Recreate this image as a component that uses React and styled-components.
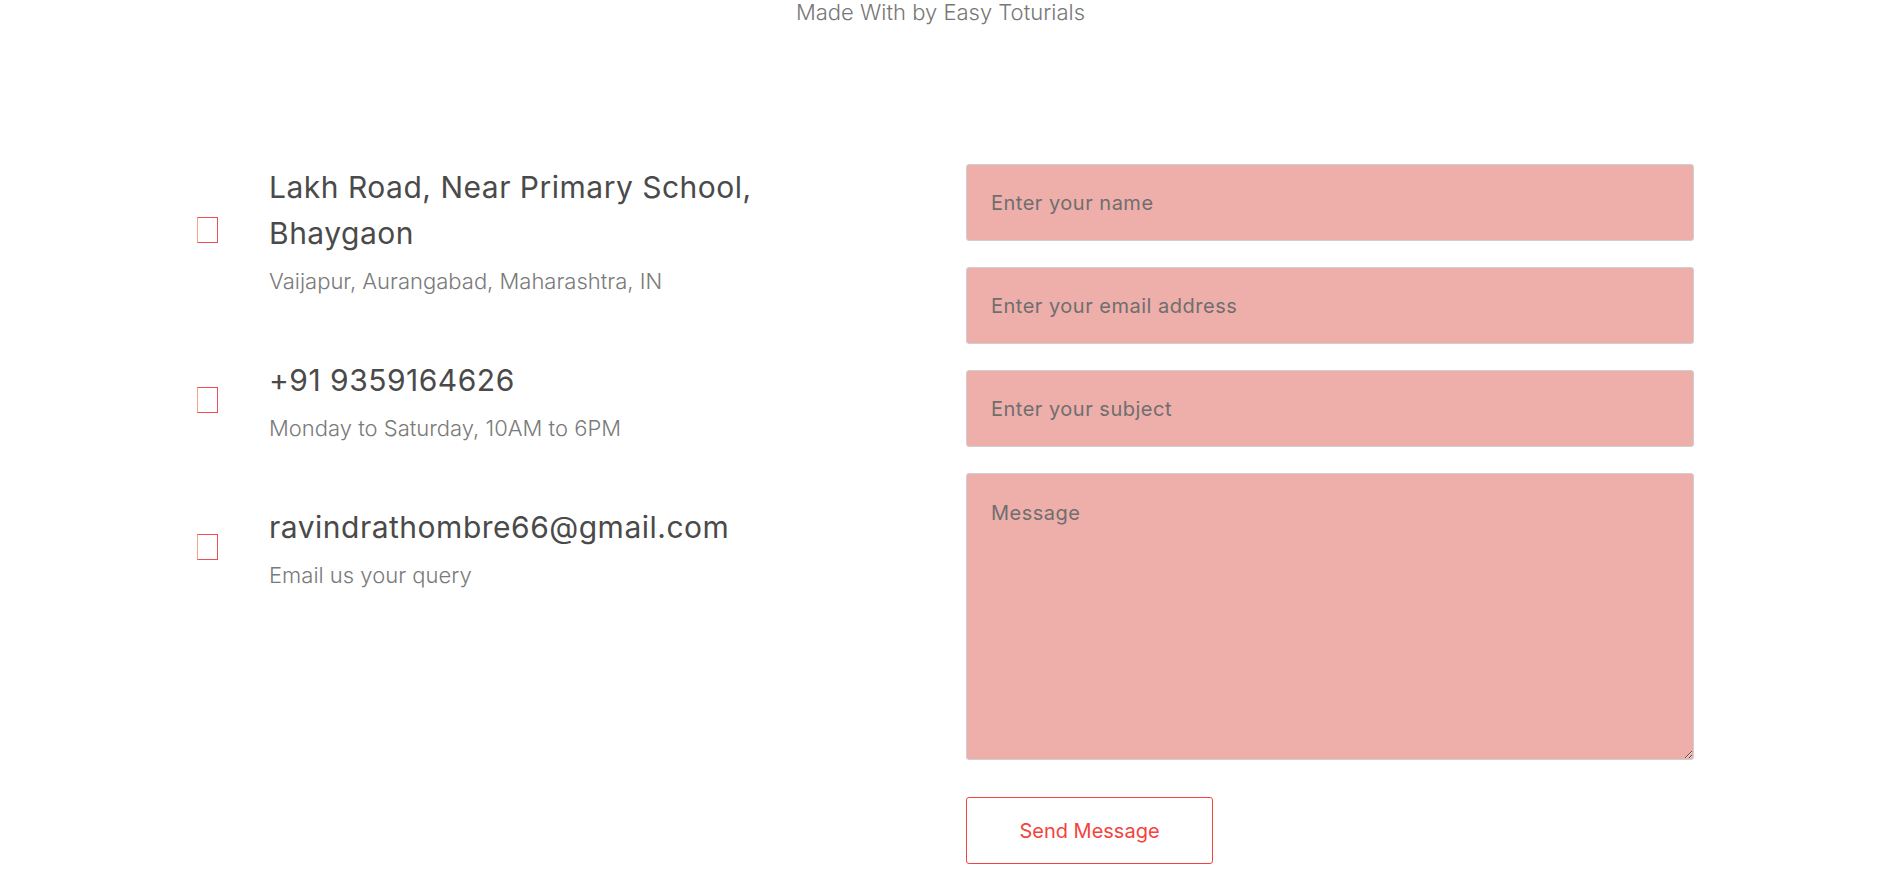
import React from 'react'
import styled, { createGlobalStyle } from 'styled-components'

const GlobalStyle = createGlobalStyle`
  * { box-sizing: border-box; }
  body {
    margin: 0;
    background: #ffffff;
    font-family: Inter, "Noto Sans", sans-serif;
  }
`

const Credit = styled.p`
  margin: 0;
  text-align: center;
  font-size: 22px;
  line-height: 24px;
  font-weight: 300;
  color: #777777;
`

const Section = styled.section`
  display: flex;
  justify-content: space-between;
  padding: 140px 187px 26px 197px;
`

const InfoList = styled.div`
  display: flex;
  flex-direction: column;
  gap: 61px;
  width: 600px;
`

const InfoRow = styled.div`
  display: flex;
  align-items: center;
  gap: 51px;
`

const Glyph = styled.span`
  flex: 0 0 auto;
  width: 21px;
  height: 26px;
  border: 1px solid #ee4f55;
  border-left-color: #f6a38a;
`

const InfoText = styled.div`
  display: flex;
  flex-direction: column;
  gap: 10px;
`

const Title = styled.h3`
  margin: 0;
  font-size: 30px;
  line-height: 46px;
  font-weight: 400;
  letter-spacing: 0.5px;
  color: #4a4a4a;
`

const Sub = styled.p`
  margin: 0;
  font-size: 22px;
  line-height: 30px;
  font-weight: 300;
  color: #7a7a7a;
`

const Form = styled.form`
  display: flex;
  flex-direction: column;
  gap: 26px;
  width: 728px;
`

const Field = styled.input`
  height: 77px;
  width: 100%;
  padding: 0 24px;
  background: #eeaeaa;
  border: 1px solid #cfcfcf;
  border-radius: 3px;
  font-family: inherit;
  font-size: 20px;
  letter-spacing: 0.5px;
  color: #555;
  outline: none;

  &::placeholder { color: #6e6e6e; }
`

const Area = styled.textarea`
  height: 287px;
  width: 100%;
  padding: 25px 24px;
  background: #eeaeaa;
  border: 1px solid #cfcfcf;
  border-radius: 3px;
  font-family: inherit;
  font-size: 20px;
  letter-spacing: 0.5px;
  line-height: 28px;
  color: #555;
  outline: none;
  resize: vertical;

  &::placeholder { color: #6e6e6e; }
`

const SendButton = styled.button`
  align-self: flex-start;
  margin-top: 11px;
  width: 247px;
  height: 67px;
  background: #ffffff;
  border: 1px solid #f4433c;
  border-radius: 3px;
  font-family: inherit;
  font-size: 20px;
  color: #f4433c;
  cursor: pointer;
`

const info = [
  { title: 'Lakh Road, Near Primary School, Bhaygaon', sub: 'Vaijapur, Aurangabad, Maharashtra, IN' },
  { title: '+91 9359164626', sub: 'Monday to Saturday, 10AM to 6PM' },
  { title: 'ravindrathombre66@gmail.com', sub: 'Email us your query' },
]

const App = () => {
  return (
    <>
      <GlobalStyle />
      <Credit>Made With by Easy Toturials</Credit>
      <Section>
        <InfoList>
          {info.map((item, i) => (
            <InfoRow key={i}>
              <Glyph />
              <InfoText>
                <Title>{item.title}</Title>
                <Sub>{item.sub}</Sub>
              </InfoText>
            </InfoRow>
          ))}
        </InfoList>
        <Form onSubmit={(e) => e.preventDefault()}>
          <Field type="text" placeholder="Enter your name" />
          <Field type="email" placeholder="Enter your email address" />
          <Field type="text" placeholder="Enter your subject" />
          <Area placeholder="Message" />
          <SendButton type="submit">Send Message</SendButton>
        </Form>
      </Section>
    </>
  )
}

export default App
